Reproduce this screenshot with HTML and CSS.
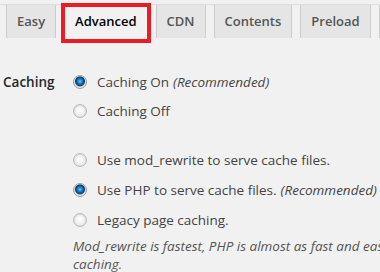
FILE: index.html
```html
<!DOCTYPE html>
<html lang="en">
<head>
    <meta charset="UTF-8">
    <meta name="viewport" content="width=device-width, initial-scale=1.0">
    <title>WP Super Cache Settings</title>
    <link rel="stylesheet" href="styles.css">
</head>
<body>
    <nav class="tabs">
        <a class="tab" href="#">Easy</a>
        <a class="tab active" href="#">Advanced<span class="marker"></span></a>
        <a class="tab" href="#">CDN</a>
        <a class="tab" href="#">Contents</a>
        <a class="tab" href="#">Preload</a>
        <a class="tab" href="#">Plugins</a>
    </nav>

    <form class="settings">
        <div class="row">
            <div class="label">Caching</div>
            <div class="field">
                <div class="group">
                    <label class="option"><input type="radio" name="caching" checked> Caching On <em>(Recommended)</em></label>
                    <label class="option"><input type="radio" name="caching"> Caching Off</label>
                </div>
                <div class="group">
                    <label class="option"><input type="radio" name="mode"> Use mod_rewrite to serve cache files.</label>
                    <label class="option"><input type="radio" name="mode" checked> Use PHP to serve cache files. <em>(Recommended)</em></label>
                    <label class="option"><input type="radio" name="mode"> Legacy page caching.</label>
                </div>
                <p class="description">Mod_rewrite is fastest, PHP is almost as fast and easier to get working, while legacy caching is slower again, but more flexible and also easy to get working. New users should use PHP<br>caching.</p>
            </div>
        </div>
    </form>
</body>
</html>
```

FILE: styles.css
```css
html, body {
    overflow: hidden;
}
body {
    margin: 0;
    background-color: #f1f1f1;
    color: #444;
    font-family: "Open Sans", "Noto Sans", sans-serif;
    font-size: 13.5px;
}
.tabs {
    display: flex;
    gap: 8px;
    margin-top: 4px;
    padding-left: 6px;
    border-top: 1px solid #ddd;
    white-space: nowrap;
    font-size: 13px;
}
.tab {
    position: relative;
    flex: none;
    height: 33px;
    line-height: 33px;
    padding: 0 10px;
    background-color: #e5e5e5;
    border: 1px solid #ccc;
    border-top: none;
    border-bottom: none;
    color: #555;
    font-weight: 600;
    text-decoration: none;
}
.tab.active {
    background-color: #f1f1f1;
    color: #000;
}
.marker {
    position: absolute;
    left: -4px;
    right: -4px;
    top: -2px;
    bottom: -5px;
    border: 4px solid #ec1c24;
}
.settings {
    margin-top: 35px;
}
.row {
    display: flex;
}
.label {
    flex: none;
    width: 70px;
    padding-left: 3px;
    line-height: 18px;
    color: #23282d;
    font-weight: 600;
}
.field {
    display: flex;
    flex-direction: column;
    gap: 31px;
    white-space: nowrap;
}
.group {
    display: flex;
    flex-direction: column;
    gap: 12px;
}
.group:first-child {
    gap: 11px;
}
.option {
    display: flex;
    align-items: center;
    gap: 10px;
    line-height: 18px;
}
.option em {
    margin-left: -6px;
}
input[type="radio"] {
    appearance: none;
    flex: none;
    width: 14px;
    height: 14px;
    margin: 0;
    border-radius: 50%;
    border: 1px solid #b4b9be;
    background: radial-gradient(circle at 50% 40%, #fff 0, #f4f4f4 40%, #d8d8d8 100%);
    box-shadow: inset 0 1px 2px rgba(0, 0, 0, 0.1);
}
input[type="radio"]:checked {
    border-color: #9aa0a6;
    background: radial-gradient(circle at 50% 45%, #7cc4f4 0, #1e88d0 2px, #0d5a9a 3.5px, #1b3f63 4.5px, #e8e8e8 5.5px, #d4d4d4 100%);
}
.description {
    margin: -23px 0 0;
    line-height: 18px;
    color: #555;
    font-style: italic;
}
```
